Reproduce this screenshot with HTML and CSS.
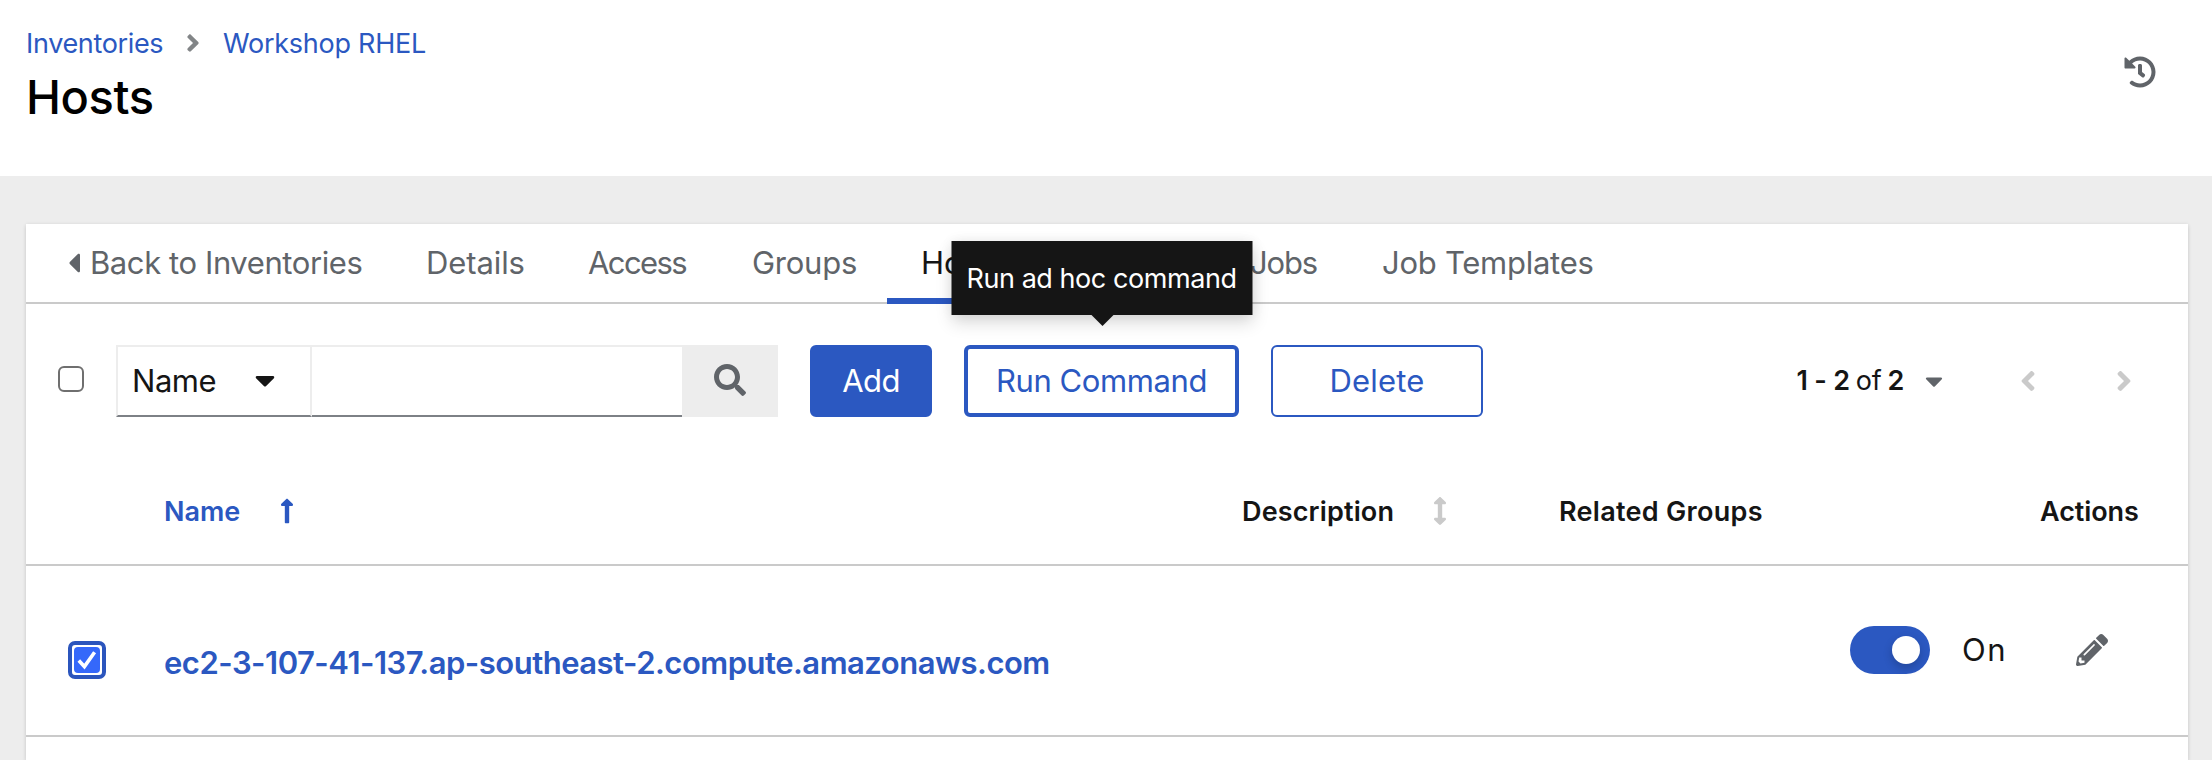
FILE: index.html
```html
<!DOCTYPE html>
<html lang="en">
<head>
<meta charset="utf-8">
<title>Hosts</title>
<link rel="stylesheet" href="styles.css">
</head>
<body>
<header class="page-header">
  <div class="heading">
    <nav class="breadcrumb">
      <a class="crumb-first">Inventories</a>
      <svg class="crumb-sep" viewBox="0 0 256 512"><path d="M224.3 273l-136 136c-9.4 9.4-24.6 9.4-33.9 0l-22.6-22.6c-9.4-9.4-9.4-24.6 0-33.9l96.4-96.4-96.4-96.4c-9.4-9.4-9.4-24.6 0-33.9L54.3 103c9.4-9.4 24.6-9.4 33.9 0l136 136c9.5 9.4 9.5 24.6.1 34z"/></svg>
      <a>Workshop RHEL</a>
    </nav>
    <h1 class="title">Hosts</h1>
  </div>
  <svg class="history" viewBox="0 0 512 512"><path d="M504 255.531c.253 136.64-111.18 248.372-247.82 248.468-59.015.042-113.223-20.53-155.822-54.911-11.077-8.94-11.905-25.541-1.839-35.607l11.267-11.267c8.609-8.609 22.353-9.551 31.891-1.984C173.062 425.135 212.781 440 256 440c101.705 0 184-82.311 184-184 0-101.705-82.311-184-184-184-48.814 0-93.149 18.969-126.068 49.932l50.754 50.754c10.08 10.08 2.941 27.314-11.313 27.314H24c-8.837 0-16-7.163-16-16V38.627c0-14.254 17.234-21.393 27.314-11.314l49.372 49.372C129.209 34.136 189.552 8 256 8c136.81 0 247.747 110.78 248 247.531zm-180.912 78.784l9.823-12.63c8.138-10.463 6.253-25.542-4.21-33.679L288 256.349V152c0-13.255-10.745-24-24-24h-16c-13.255 0-24 10.745-24 24v135.651l65.409 50.874c10.463 8.137 25.541 6.253 33.679-4.21z"/></svg>
</header>
<main class="content">
  <section class="card">
    <nav class="tabs">
      <a class="tab tab-back"><svg class="caret-left" viewBox="0 0 192 512"><path d="M192 127.338v257.324c0 17.818-21.543 26.741-34.142 14.142L29.196 270.142c-7.81-7.81-7.81-20.474 0-28.284l128.662-128.662c12.599-12.6 34.142-3.676 34.142 14.142z"/></svg>Back to Inventories</a>
      <a class="tab tab-details">Details</a>
      <a class="tab tab-access">Access</a>
      <a class="tab tab-groups">Groups</a>
      <a class="tab tab-hosts">Hosts</a>
      <a class="tab tab-jobs">Jobs</a>
      <a class="tab tab-templates">Job Templates</a>
    </nav>

    <div class="toolbar">
      <span class="checkbox"></span>
      <div class="filter">
        <div class="select">Name<svg class="caret" viewBox="0 0 320 512"><path d="M31.3 192h257.3c17.8 0 26.7 21.5 14.1 34.1L174.1 354.8c-7.8 7.8-20.5 7.8-28.3 0L17.2 226.1C4.6 213.5 13.5 192 31.3 192z"/></svg></div>
        <div class="field"></div>
        <div class="search"><svg viewBox="0 0 512 512"><path d="M505 442.7L405.3 343c-4.5-4.5-10.6-7-17-7H372c27.6-35.3 44-79.7 44-128C416 93.1 322.9 0 208 0S0 93.1 0 208s93.1 208 208 208c48.3 0 92.7-16.4 128-44v16.3c0 6.4 2.5 12.5 7 17l99.7 99.7c9.4 9.4 24.6 9.4 33.9 0l28.3-28.3c9.4-9.4 9.4-24.6.1-34zM208 336c-70.7 0-128-57.2-128-128 0-70.7 57.2-128 128-128 70.7 0 128 57.2 128 128 0 70.7-57.2 128-128 128z"/></svg></div>
      </div>
      <div class="button button-add">Add</div>
      <div class="button button-run">Run Command<div class="tooltip">Run ad hoc command</div></div>
      <div class="button button-delete">Delete</div>
      <div class="pagination">
        <div class="range"><b>1 - 2</b><span>of</span><b>2</b></div>
        <svg class="caret-small" viewBox="0 0 320 512"><path d="M31.3 192h257.3c17.8 0 26.7 21.5 14.1 34.1L174.1 354.8c-7.8 7.8-20.5 7.8-28.3 0L17.2 226.1C4.6 213.5 13.5 192 31.3 192z"/></svg>
        <svg class="angle angle-prev" viewBox="0 0 256 512"><path d="M224.3 273l-136 136c-9.4 9.4-24.6 9.4-33.9 0l-22.6-22.6c-9.4-9.4-9.4-24.6 0-33.9l96.4-96.4-96.4-96.4c-9.4-9.4-9.4-24.6 0-33.9L54.3 103c9.4-9.4 24.6-9.4 33.9 0l136 136c9.5 9.4 9.5 24.6.1 34z"/></svg>
        <svg class="angle" viewBox="0 0 256 512"><path d="M224.3 273l-136 136c-9.4 9.4-24.6 9.4-33.9 0l-22.6-22.6c-9.4-9.4-9.4-24.6 0-33.9l96.4-96.4-96.4-96.4c-9.4-9.4-9.4-24.6 0-33.9L54.3 103c9.4-9.4 24.6-9.4 33.9 0l136 136c9.5 9.4 9.5 24.6.1 34z"/></svg>
      </div>
    </div>

    <div class="row head">
      <span></span>
      <div class="cell sorted">Name<svg class="sort" viewBox="0 0 256 512"><path d="M88 166.059V468c0 6.627 5.373 12 12 12h56c6.627 0 12-5.373 12-12V166.059h46.059c21.382 0 32.09-25.851 16.971-40.971l-86.059-86.059c-9.373-9.373-24.569-9.373-33.941 0l-86.059 86.059c-15.119 15.119-4.411 40.971 16.971 40.971H88z"/></svg></div>
      <div class="cell description">Description<svg class="sort" viewBox="0 0 256 512"><path d="M214.059 377.941H168V134.059h46.059c21.382 0 32.09-25.851 16.971-40.971L144.971 7.029c-9.373-9.373-24.568-9.373-33.941 0L24.971 93.088c-15.119 15.119-4.411 40.971 16.971 40.971H88v243.882H41.941c-21.382 0-32.09 25.851-16.971 40.971l86.059 86.059c9.373 9.373 24.568 9.373 33.941 0l86.059-86.059c15.12-15.119 4.412-40.971-16.97-40.971z"/></svg></div>
      <div class="cell related">Related Groups</div>
      <div class="cell actions-head">Actions</div>
    </div>

    <div class="row host">
      <span class="focus-ring"><span class="checked"><svg viewBox="0 0 26 26"><path d="M4.8 13.6L10.4 19.6L20.6 5.2" fill="none" stroke="#fff" stroke-width="3.6"/></svg></span></span>
      <a class="host-name">ec2-3-107-41-137.ap-southeast-2.compute.amazonaws.com</a>
      <div class="host-actions">
        <span class="toggle"><span class="knob"></span></span>
        <span class="toggle-label">On</span>
        <svg class="pencil" viewBox="0 0 512 512"><path d="M497.9 142.1l-46.1 46.1c-4.7 4.7-12.3 4.7-17 0l-111-111c-4.7-4.7-4.7-12.3 0-17l46.1-46.1c18.7-18.7 49.1-18.7 67.9 0l60.1 60.1c18.8 18.7 18.8 49.1 0 67.9zM284.2 99.8L21.6 362.4.4 483.9c-2.9 16.4 11.4 30.6 27.8 27.8l121.5-21.3 262.6-262.6c4.7-4.7 4.7-12.3 0-17l-111-111c-4.8-4.7-12.4-4.7-17.1 0zM124.1 339.9c-5.5-5.5-5.5-14.3 0-19.8l154-154c5.5-5.5 14.3-5.5 19.8 0s5.5 14.3 0 19.8l-154 154c-5.5 5.5-14.3 5.5-19.8 0zM88 424h48v36.3l-64.5 11.3-31.1-31.1L51.7 376H88v48z"/></svg>
      </div>
    </div>
  </section>
</main>
</body>
</html>
```
FILE: styles.css
```css
* { box-sizing: border-box; }
body {
  margin: 0;
  height: 760px;
  overflow: hidden;
  display: flex;
  flex-direction: column;
  background: #ededed;
  color: #151515;
  font-family: Inter, "Open Sans", sans-serif;
  font-size: 31px;
}
svg { display: block; flex: none; fill: currentColor; }

/* Page header */
.page-header {
  display: flex;
  justify-content: space-between;
  height: 176px;
  flex: none;
  padding: 24px 56px 0 26px;
  background: #fff;
}
.breadcrumb {
  display: flex;
  align-items: center;
  height: 38px;
  color: #2b58c1;
  font-size: 27px;
  letter-spacing: -0.25px;
}
.crumb-first { width: 160px; letter-spacing: -0.34px; }
.crumb-sep { width: 14px; height: 28px; margin-right: 23px; color: #828587; }
.title {
  margin: 5px 0 0;
  color: #000;
  font-size: 47px;
  font-weight: 500;
  line-height: 60px;
  letter-spacing: -0.4px;
}
.history { width: 32px; height: 32px; margin-top: 32px; color: #606469; }

/* Card and tabs */
.content { flex: 1; display: flex; padding: 48px 24px 0 26px; }
.card {
  flex: 1;
  background: #fff;
  box-shadow: 0 2px 4px rgba(3, 3, 3, 0.12), 0 0 4px rgba(3, 3, 3, 0.06);
}
.tabs {
  display: flex;
  height: 80px;
  padding-left: 10px;
  border-bottom: 2px solid #cacaca;
  color: #606469;
  line-height: 78px;
}
.tab { display: flex; align-items: center; height: 78px; padding-left: 32px; white-space: nowrap; }
.tab-back { width: 358px; letter-spacing: -0.41px; }
.caret-left { width: 12px; height: 32px; margin-right: 10px; }
.tab-details { width: 162px; letter-spacing: -0.1px; }
.tab-access { width: 164px; letter-spacing: -1.6px; }
.tab-groups { width: 167px; letter-spacing: -0.26px; }
.tab-hosts { width: 145px; height: 80px; padding: 4px 0 0 34px; color: #151515; border-bottom: 6px solid #2b58c1; line-height: 70px; }
.tab-jobs { width: 132px; margin-left: 186px; letter-spacing: -1.2px; }
.tab-templates { letter-spacing: -0.26px; }

/* Toolbar */
.toolbar { display: flex; align-items: center; height: 72px; margin-top: 41px; padding-left: 32px; }
.checkbox { width: 26px; height: 26px; margin: -4px 32px 0 0; border: 2px solid #6f6f6f; border-radius: 6px; }
.filter { display: flex; height: 72px; margin-right: 32px; }
.select {
  display: flex;
  align-items: center;
  width: 196px;
  padding: 0 0 2px 14px;
  border: 2px solid #ededed;
  border-bottom-color: #7d8186;
  letter-spacing: -0.45px;
}
.caret { width: 20px; height: 32px; margin-left: auto; margin-right: 35px; }
.field { width: 370px; border-top: 2px solid #ededed; border-bottom: 2px solid #7d8186; }
.search { display: flex; align-items: center; justify-content: center; width: 96px; padding-bottom: 2px; background: #ededed; color: #606469; }
.search svg { width: 32px; height: 32px; }
.button {
  position: relative;
  display: flex;
  align-items: center;
  justify-content: center;
  height: 72px;
  margin-right: 32px;
  padding-bottom: 2px;
  border: 2px solid #2b58c1;
  border-radius: 6px;
  color: #2b58c1;
  white-space: nowrap;
}
.button-add { width: 122px; background: #2b58c1; color: #fff; letter-spacing: -0.6px; }
.button-run { width: 275px; border-width: 4px; letter-spacing: -0.4px; }
.button-delete { width: 212px; letter-spacing: 0.2px; }
.tooltip {
  position: absolute;
  left: 50%;
  bottom: 98px;
  width: 301px;
  height: 74px;
  transform: translateX(-50%);
  background: #151515;
  color: #fff;
  font-size: 27px;
  line-height: 75px;
  text-align: center;
  letter-spacing: -0.44px;
  box-shadow: 0 8px 16px rgba(3, 3, 3, 0.14), 0 0 12px rgba(3, 3, 3, 0.07);
}
.tooltip::after {
  content: "";
  position: absolute;
  top: 74px;
  left: 140px;
  border: 11px solid transparent;
  border-top-color: #151515;
  border-bottom: 0;
}
.pagination { display: flex; align-items: center; margin-left: auto; padding-right: 56px; }
.range { display: flex; font-size: 27px; letter-spacing: -0.25px; line-height: 34px; gap: 6px; margin-right: 21px; }
.range b { font-weight: 600; }
.caret-small { width: 18px; height: 28px; margin-right: 77px; color: #606469; }
.angle { width: 16px; height: 32px; color: #cacaca; }
.angle-prev { margin-right: 80px; transform: scaleX(-1); }

/* Host table */
.row { display: grid; align-items: center; border-bottom: 2px solid #cacaca; }
.head {
  grid-template-columns: 138px 1078px 317px 481px auto;
  height: 111px;
  margin-top: 38px;
  padding-top: 3px;
  font-size: 27px;
  font-weight: 600;
}
.cell { display: flex; align-items: center; white-space: nowrap; }
.sorted { color: #2b58c1; }
.sort { width: 14px; height: 28px; margin-left: 40px; }
.description { letter-spacing: 0.15px; }
.description .sort { margin-left: 39px; color: #cacaca; }
.related { letter-spacing: 0.3px; }
.actions-head { letter-spacing: -0.1px; }
.host { grid-template-columns: 42px 96px 1686px auto; height: 171px; }
.focus-ring {
  grid-column: 2;
  width: 38px;
  height: 38px;
  margin-top: 18px;
  padding: 2px;
  border: 4px solid #2b55bd;
  border-radius: 7px;
}
.checked { display: block; height: 26px; border-radius: 4px; background: #3568fa; }
.checked svg { width: 26px; height: 26px; }
.host-name { margin-top: 23px; color: #2b58c1; font-weight: 600; letter-spacing: -0.5px; white-space: nowrap; }
.host-actions { display: flex; align-items: center; padding-bottom: 2px; }
.toggle { display: flex; align-items: center; width: 80px; height: 48px; padding-left: 42px; border-radius: 24px; background: #2b58c1; }
.knob { width: 28px; height: 28px; border-radius: 50%; background: #fff; box-shadow: 0 4px 10px rgba(3, 3, 3, 0.2); }
.toggle-label { width: 114px; margin-left: 32px; letter-spacing: 1.5px; }
.pencil { width: 32px; height: 32px; color: #606469; }
```
